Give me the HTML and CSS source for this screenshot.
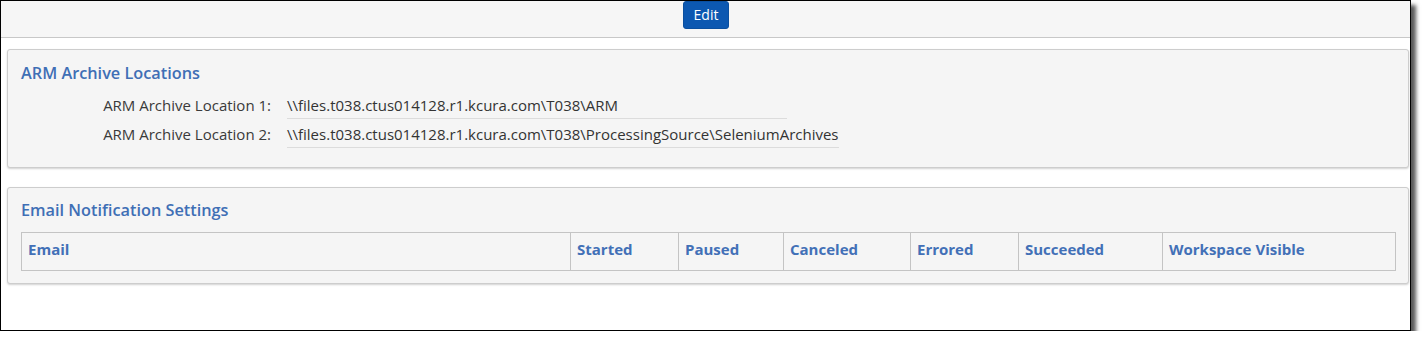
FILE: index.html
```html
<!DOCTYPE html>
<html>
<head>
<meta charset="utf-8">
<link rel="stylesheet" href="styles.css">
</head>
<body>
<div class="frame">
  <div class="toolbar">
    <button class="btn-edit">Edit</button>
  </div>
  <div class="content">
    <section class="card card-arm">
      <h2 class="card-title">ARM Archive Locations</h2>
      <div class="field-row">
        <span class="field-label">ARM Archive Location 1:</span>
        <span class="field-value">\\files.t038.ctus014128.r1.kcura.com\T038\ARM</span>
      </div>
      <div class="field-row">
        <span class="field-label">ARM Archive Location 2:</span>
        <span class="field-value">\\files.t038.ctus014128.r1.kcura.com\T038\ProcessingSource\SeleniumArchives</span>
      </div>
    </section>
    <section class="card card-email">
      <h2 class="card-title">Email Notification Settings</h2>
      <table class="grid">
        <colgroup>
          <col class="c-email">
          <col class="c-started">
          <col class="c-paused">
          <col class="c-canceled">
          <col class="c-errored">
          <col class="c-succeeded">
          <col class="c-visible">
        </colgroup>
        <thead>
          <tr>
            <th>Email</th>
            <th>Started</th>
            <th>Paused</th>
            <th>Canceled</th>
            <th>Errored</th>
            <th>Succeeded</th>
            <th>Workspace Visible</th>
          </tr>
        </thead>
      </table>
    </section>
  </div>
</div>
</body>
</html>
```
FILE: styles.css
```css
* { box-sizing: border-box; }
html, body { margin: 0; padding: 0; background: #fff; }
body { font-family: "Open Sans", "Liberation Sans", sans-serif; font-size: 15px; color: #333; }

.frame {
  width: 1411px;
  height: 331px;
  border: 1px solid #000;
  background: #fff;
  box-shadow: 5px 5px 4px rgba(0, 0, 0, 0.65);
  overflow: hidden;
}

.toolbar {
  height: 37px;
  background: #f6f6f6;
  border-bottom: 1px solid #c8c8c8;
  display: flex;
  justify-content: center;
  align-items: flex-start;
}

.btn-edit {
  width: 46px;
  height: 28px;
  margin-left: 1px;
  border: 1px solid #0a4f9f;
  border-radius: 3px;
  background: #0c58b1;
  color: #fff;
  font-family: "Open Sans", "Liberation Sans", sans-serif;
  font-size: 14px;
  line-height: 20px;
  padding: 0;
}

.content {
  padding: 11px 1px 0 6px;
  display: flex;
  flex-direction: column;
  gap: 19px;
}

.card {
  background: #f5f5f5;
  border: 1px solid #cdcdcd;
  border-radius: 3px;
  box-shadow: 0 1px 2px rgba(0, 0, 0, 0.18);
}

.card-arm { padding: 12px 13px 19px 13px; }
.card-email { padding: 11px 11px 12px 13px; }

.card-title {
  margin: 0;
  font-size: 16.3px;
  line-height: 22px;
  font-weight: 600;
  color: #3f6fb5;
}

.field-row {
  display: flex;
  align-items: flex-start;
  gap: 16px;
}
.card-title + .field-row { margin-top: 11px; }
.field-row + .field-row { margin-top: 5px; }

.field-label {
  width: 250px;
  text-align: right;
  line-height: 20px;
  color: #3a3a3a;
}

.field-value {
  min-width: 500px;
  line-height: 20px;
  padding-bottom: 3px;
  border-bottom: 1px solid #dcdcdc;
  color: #333;
}

.grid {
  margin-top: 11px;
  width: 1374px;
  table-layout: fixed;
  border-collapse: collapse;
}
.grid th {
  border: 1px solid #c4c4c4;
  text-align: left;
  font-weight: 700;
  font-size: 15px;
  line-height: 20px;
  color: #4270b7;
  padding: 6px 6px 11px 6px;
}
.c-email { width: 549px; }
.c-started { width: 108px; }
.c-paused { width: 105px; }
.c-canceled { width: 127px; }
.c-errored { width: 108px; }
.c-succeeded { width: 144px; }
.c-visible { width: 233px; }
```
